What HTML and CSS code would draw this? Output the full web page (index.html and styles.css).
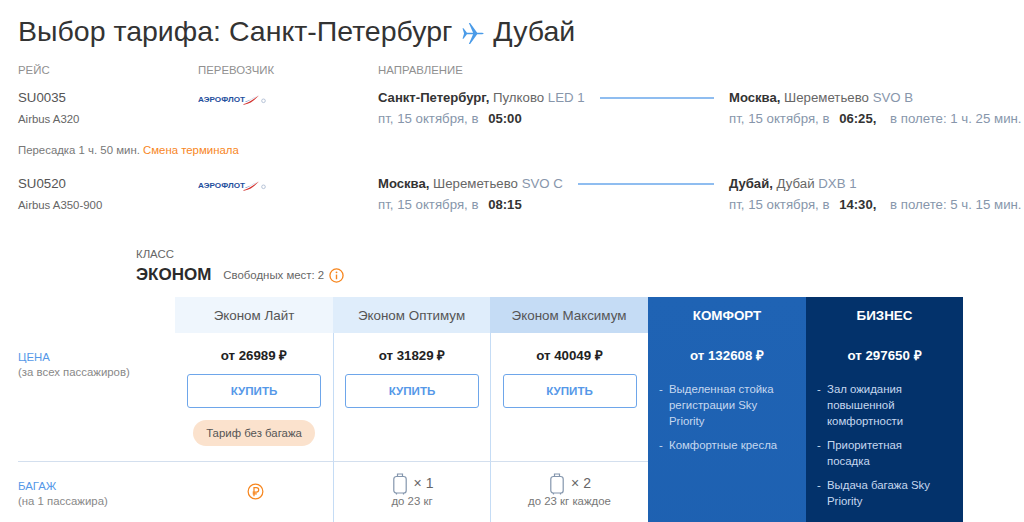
FILE: index.html
```html
<!DOCTYPE html>
<html lang="ru">
<head>
<meta charset="utf-8">
<title>Выбор тарифа</title>
<link rel="stylesheet" href="styles.css">
</head>
<body>
<svg width="0" height="0" class="defs">
  <defs>
    <symbol id="logo" viewBox="0 0 68 12">
      <text x="0" y="8.4" class="logo-text" textLength="47" lengthAdjust="spacingAndGlyphs">АЭРОФЛОТ</text>
      <path d="M45 10.2 C50 9 55 5 61 1.6 C57 5.5 53 9.6 46 10.8Z" fill="#d3322f"/>
      <path d="M47 7.6 C52 6.6 56 3.6 61 .8 C57 3 53 6.2 48 7.8Z" fill="#2d5aa8"/>
      <circle cx="65.5" cy="6.8" r="1.8" fill="none" stroke="#aebcd2" stroke-width="0.9"/>
    </symbol>
    <symbol id="bag" viewBox="0 0 14 22">
      <path d="M4.5 3.5V1h5v2.5" fill="none" stroke="#8496ad" stroke-width="1.2"/>
      <rect x="0.8" y="3.5" width="12.4" height="16.5" rx="2.6" fill="none" stroke="#8496ad" stroke-width="1.2"/>
      <path d="M3.5 20v1.4M10.5 20v1.4" stroke="#8496ad" stroke-width="1.2"/>
    </symbol>
  </defs>
</svg>
<main class="page">
  <h1 class="title">Выбор тарифа: Санкт-Петербург
    <svg class="plane" viewBox="0 0 24 24"><path d="M1.6 6.6h1l3.6 4.6h6.4L8.2 1h1.3l7.4 10.2h4.2c1.5 0 2.6.3 2.6.8s-1.1.8-2.6.8h-4.2L9.5 23H8.2l4.4-10.2H6.2l-3.6 4.6h-1L3.2 12z" fill="#4a9be8"/></svg>
    Дубай</h1>

  <div class="flights">
    <div class="head">Рейс</div><div class="head">Перевозчик</div><div class="head">Направление</div>

    <div class="flight-no">SU0035<small>Airbus A320</small></div>
    <svg class="logo"><use href="#logo"/></svg>
    <div class="route">
      <div class="point"><p><b>Санкт-Петербург,</b> Пулково <span class="code">LED 1</span></p><p class="time">пт, 15 октября, в <b>05:00</b></p></div>
      <i class="line"></i>
      <div class="point end"><p><b>Москва,</b> Шереметьево <span class="code">SVO B</span></p><p class="time">пт, 15 октября, в <b>06:25,</b> в полете: 1 ч. 25 мин.</p></div>
    </div>

    <div class="transfer">Пересадка 1 ч. 50 мин. <span>Смена терминала</span></div>

    <div class="flight-no">SU0520<small>Airbus A350-900</small></div>
    <svg class="logo"><use href="#logo"/></svg>
    <div class="route">
      <div class="point"><p><b>Москва,</b> Шереметьево <span class="code">SVO C</span></p><p class="time">пт, 15 октября, в <b>08:15</b></p></div>
      <i class="line"></i>
      <div class="point end"><p><b>Дубай,</b> Дубай <span class="code">DXB 1</span></p><p class="time">пт, 15 октября, в <b>14:30,</b> в полете: 5 ч. 15 мин.</p></div>
    </div>
  </div>

  <section class="class-info">
    <div class="class-label">Класс</div>
    <div class="class-row">
      <strong>ЭКОНОМ</strong>
      <span>Свободных мест: 2</span>
      <svg class="info" viewBox="0 0 16 16"><circle cx="8" cy="8" r="7" fill="none" stroke="#f7861e" stroke-width="1.4"/><circle cx="8" cy="4.6" r="1" fill="#f7861e"/><path d="M8 7v5" stroke="#f7861e" stroke-width="1.5"/></svg>
    </div>
  </section>

  <div class="tariffs">
    <div class="th th-lite">Эконом Лайт</div>
    <div class="th th-opt">Эконом Оптимум</div>
    <div class="th th-max">Эконом Максимум</div>

    <div class="premium comfort">
      <h3>КОМФОРТ</h3>
      <div class="price">от 132608 ₽</div>
      <ul>
        <li>Выделенная стойка регистрации Sky Priority</li>
        <li>Комфортные кресла</li>
      </ul>
    </div>
    <div class="premium business">
      <h3>БИЗНЕС</h3>
      <div class="price">от 297650 ₽</div>
      <ul>
        <li>Зал ожидания повышенной комфортности</li>
        <li>Приоритетная посадка</li>
        <li>Выдача багажа Sky Priority</li>
      </ul>
    </div>

    <div class="row-label">Цена<small>(за всех пассажиров)</small></div>
    <div class="cell"><div class="price">от 26989 ₽</div><button class="buy">Купить</button><div class="note">Тариф без багажа</div></div>
    <div class="cell line-l"><div class="price">от 31829 ₽</div><button class="buy">Купить</button></div>
    <div class="cell line-l"><div class="price">от 40049 ₽</div><button class="buy">Купить</button></div>

    <div class="row-label row-b">Багаж<small>(на 1 пассажира)</small></div>
    <div class="cell-b row-b">
      <svg class="rub" viewBox="0 0 18 18"><circle cx="9" cy="9" r="7.8" fill="none" stroke="#f7861e" stroke-width="1.3"/><path d="M7.4 14V4.8h2.6a2.3 2.3 0 0 1 0 4.8H6M6 11.6h4.4" fill="none" stroke="#f7861e" stroke-width="1.3"/></svg>
    </div>
    <div class="cell-b row-b line-l">
      <div class="bag-row"><svg class="bag"><use href="#bag"/></svg><span>× 1</span></div>
      <small>до 23 кг</small>
    </div>
    <div class="cell-b row-b line-l">
      <div class="bag-row"><svg class="bag"><use href="#bag"/></svg><span>× 2</span></div>
      <small>до 23 кг каждое</small>
    </div>
  </div>
</main>
</body>
</html>
```
FILE: styles.css
```css
* { box-sizing: border-box; }
html, body { margin: 0; height: 100%; overflow: hidden; background: #fff; }
body { font-family: "Liberation Sans", Arial, sans-serif; color: #333; }
.defs { position: absolute; }
.page { padding: 0 0 0 18px; }
.title { margin: 0; padding-top: 14px; height: 61px; font-size: 28.5px; line-height: 35px; font-weight: 400; color: #333; }
.plane { width: 23px; height: 23px; vertical-align: -4px; margin: 0 1px; }

.flights { display: grid; grid-template-columns: 180px 180px 1fr; font-size: 13.25px; }
.head { text-transform: uppercase; font-size: 11.4px; line-height: 18px; color: #909090; height: 28px; }
.flight-no { font-size: 13.25px; line-height: 18px; color: #555; height: 44px; }
.flight-no small { display: block; margin-top: 3px; font-size: 11.4px; line-height: 18px; color: #666; }
.logo { width: 68px; height: 12px; margin-top: 5px; }
.logo-text { font: 700 6.5px "Liberation Sans", sans-serif; fill: #1f4f9d; }
.route { display: flex; align-items: flex-start; }
.point p { margin: 0 0 3px; line-height: 18px; color: #666; white-space: nowrap; }
.point b { color: #333; font-weight: 700; font-size: 13.1px; }
.code { color: #8796ab; }
.point .time { color: #8796ab; }
.time b { margin: 0 10px 0 6px; }
.line { flex: 1; height: 2px; margin: 8px 15px 0; background: #8fbdf0; }
.point.end { width: 295px; flex: none; }
.transfer { grid-column: 1 / -1; font-size: 11.4px; line-height: 18px; color: #777; height: 42px; padding-top: 8px; }
.transfer span { color: #f7861e; }

.class-info { margin: 0 0 0 118px; padding-top: 27px; height: 78px; }
.class-label { text-transform: uppercase; font-size: 11.4px; line-height: 16px; color: #666; }
.class-row { display: flex; align-items: center; margin-top: 3px; font-size: 11.4px; color: #666; }
.class-row strong { font-size: 17px; font-weight: 700; color: #2b2b2b; margin-right: 12px; }
.info { width: 15px; height: 15px; margin-left: 5px; }

.tariffs { display: grid; grid-template-columns: 157px 158px 157px 158px 158px 157px; grid-template-rows: 36px 128px 200px; width: 945px; }
.th { display: flex; align-items: center; justify-content: center; font-size: 13.4px; color: #555; }
.th-lite { grid-column: 2; background: #eff6fd; }
.th-opt { background: #dfedfb; }
.th-max { background: #c5dcf5; }
.premium { grid-row: 1 / 4; color: #fff; text-align: center; }
.comfort { grid-column: 5; background: linear-gradient(#1f63b4, #1d60b0); }
.business { grid-column: 6; background: #03326b; }
.premium h3 { margin: 0; font-size: 13.4px; line-height: 37px; font-weight: 700; }
.price { font-size: 13.3px; line-height: 18px; font-weight: 700; color: #222; padding-top: 14px; }
.premium .price { color: #fff; padding-top: 13px; }
.premium ul { list-style: none; margin: 16px 0 0; padding: 0 25px 0 21px; text-align: left; font-size: 11.4px; line-height: 16px; color: #c6d8ef; }
.premium li { position: relative; margin-bottom: 8px; }
.premium li::before { content: "-"; position: absolute; left: -10px; }

.row-label { grid-column: 1; grid-row: 2; padding-top: 17px; font-size: 11.4px; line-height: 15px; color: #5598e8; text-transform: uppercase; }
.row-label small { display: block; text-transform: none; font-size: 11.4px; color: #888; }
.cell, .cell-b { display: flex; flex-direction: column; align-items: center; }
.line-l { border-left: 1px solid #c5dcf5; }
.buy { width: 134px; height: 34px; margin-top: 9px; padding: 0 0 2px; border: 1px solid #6ea6ea; border-radius: 3px; background: #fff; color: #5598e8; font: 700 11.6px "Liberation Sans", sans-serif; text-transform: uppercase; }
.note { margin-top: 12px; padding: 0 13px; height: 26px; line-height: 26px; border-radius: 13px; background: #fbe2cd; font-size: 11.4px; color: #555; }

.row-b { grid-row: 3; border-top: 1px solid #d3dfee; }
.row-label.row-b { padding-top: 17px; }
.cell-b { padding-top: 11px; font-size: 11.4px; color: #777; }
.cell-b .rub { width: 17px; height: 17px; margin: 10px 0 0 3px; }
.cell-b small { font-size: 11.4px; }
.bag-row { display: flex; align-items: center; gap: 7px; font-size: 14px; color: #666; padding-left: 2px; }
.bag-row span { margin-top: -2px; }
.bag { width: 14px; height: 22px; }
```
